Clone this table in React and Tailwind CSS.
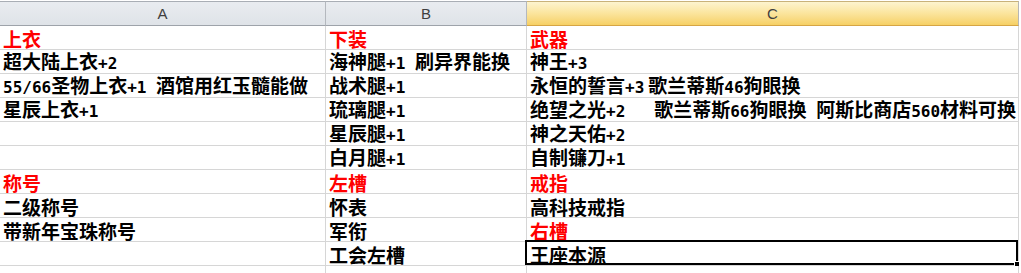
import React from "react";

// Sheet data: each cell is a list of runs; strings are text, numbers are extra gaps in px.
const rows = [
  [{ t: ["上衣"], red: true }, { t: ["下装"], red: true }, { t: ["武器"], red: true }],
  [{ t: ["超大陆上衣+2"] }, { t: ["海神腿+1 刷异界能换"] }, { t: ["神王+3"] }],
  [{ t: ["55/66圣物上衣+1 酒馆用红玉髓能做"] }, { t: ["战术腿+1"] }, { t: ["永恒的誓言+3", 4, "歌兰蒂斯46狗眼换"] }],
  [{ t: ["星辰上衣+1"] }, { t: ["琉璃腿+1"] }, { t: ["绝望之光+2   歌兰蒂斯66狗眼换 阿斯比商店560材料可换"] }],
  [{ t: [] }, { t: ["星辰腿+1"] }, { t: ["神之天佑+2"] }],
  [{ t: [] }, { t: ["白月腿+1"] }, { t: ["自制镰刀+1"] }],
  [{ t: ["称号"], red: true }, { t: ["左槽"], red: true }, { t: ["戒指"], red: true }],
  [{ t: ["二级称号"] }, { t: ["怀表"] }, { t: ["高科技戒指"] }],
  [{ t: ["带新年宝珠称号"] }, { t: ["军衔"] }, { t: ["右槽"], red: true }],
  [{ t: [] }, { t: ["工会左槽"] }, { t: ["王座本源"], active: true }],
  [{ t: [] }, { t: [] }, { t: [] }],
];

const widths = ["w-[326px]", "w-[201px]", "w-[492px]"];

// Split a string into half-width (ASCII) and full-width runs so digits get the narrow mono face.
function Runs({ text }) {
  const parts = text.match(/[\x00-\x7f]+|[^\x00-\x7f]+/g) || [];
  return parts.map((p, i) =>
    /^[\x00-\x7f]+$/.test(p) ? (
      <span key={i} className="font-['DejaVu_Sans_Mono'] text-[16px] whitespace-pre">
        {p}
      </span>
    ) : (
      <span key={i}>{p}</span>
    )
  );
}

function Cell({ cell, width }) {
  return (
    <div
      className={`relative ${width} h-[24px] shrink-0 border-b border-r border-[#d6d6d6] pl-[3px] flex items-center whitespace-nowrap ${
        cell.red ? "text-[#ff0000]" : "text-black"
      }`}
    >
      <span className="leading-[23px] pt-[1px]">
        {cell.t.map((seg, i) =>
          typeof seg === "number" ? (
            <span key={i} className="inline-block w-[4px]" />
          ) : (
            <Runs key={i} text={seg} />
          )
        )}
      </span>
      {cell.active && (
        <div className="absolute -left-[2px] -top-[2px] right-0 bottom-0 border-2 border-black pointer-events-none">
          <div className="absolute -right-[4px] -bottom-[4px] w-[6px] h-[6px] bg-black border border-white" />
        </div>
      )}
    </div>
  );
}

export default function App() {
  const heads = ["A", "B", "C"];
  return (
    <div className="w-[1021px] h-[273px] overflow-hidden bg-white font-['Noto_Sans_CJK_SC',sans-serif] text-[19px] font-bold">
      {/* column headers */}
      <div className="pt-[1px] flex">
        {heads.map((h, i) => (
          <div
            key={h}
            className={`${widths[i]} h-[25px] shrink-0 border-t border-b border-r flex items-center justify-center pt-[2px] font-['Liberation_Sans',sans-serif] font-normal text-[15px] text-[#3f3f3f] ${
              i === 2
                ? "bg-gradient-to-b from-[#fdf4cf] via-[#fbe49c] to-[#f6d064] border-t-[#c9b27a] border-b-[#d6a544] border-r-[#b6b6b6]"
                : "bg-gradient-to-b from-[#e9ecf0] to-[#dfe3e8] border-t-[#a9aeb5] border-b-[#9ea3aa] border-r-[#b4b8be]"
            }`}
          >
            {h}
          </div>
        ))}
      </div>
      {/* grid body */}
      {rows.map((r, ri) => (
        <div key={ri} className="flex">
          {r.map((c, ci) => (
            <Cell key={ci} cell={c} width={widths[ci]} />
          ))}
        </div>
      ))}
    </div>
  );
}
